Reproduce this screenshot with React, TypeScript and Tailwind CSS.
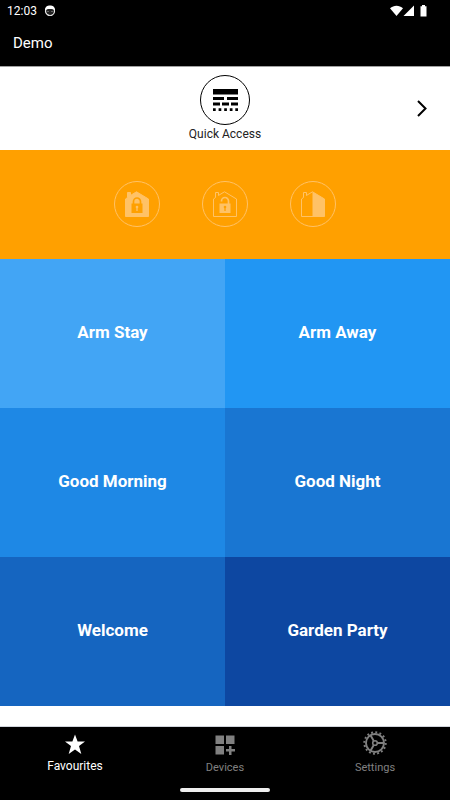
import type { ReactNode } from 'react'

interface Scene {
  name: string
  color: string
}

const SCENES: Scene[] = [
  { name: 'Arm Stay', color: 'bg-[#42a5f5]' },
  { name: 'Arm Away', color: 'bg-[#2196f3]' },
  { name: 'Good Morning', color: 'bg-[#1e88e5]' },
  { name: 'Good Night', color: 'bg-[#1976d2]' },
  { name: 'Welcome', color: 'bg-[#1565c0]' },
  { name: 'Garden Party', color: 'bg-[#0d47a1]' },
]

export default function App() {
  return (
    <div className="min-h-screen flex flex-col bg-white font-['Roboto',sans-serif]">
      <header className="bg-black text-white border-b border-neutral-400">
        <StatusBar />
        <h1 className="h-[45px] px-[13px] flex items-center text-[15px]">Demo</h1>
      </header>

      <main className="flex-1">
        <QuickAccess />

        {/* Alarm modes */}
        <section className="h-[109px] pb-px bg-[#ffa000] flex items-center justify-center gap-[42px]">
          <ModeButton label="Arm home"><HouseLocked /></ModeButton>
          <ModeButton label="Disarm"><HouseUnlocked /></ModeButton>
          <ModeButton label="Partial arm"><HouseHalf /></ModeButton>
        </section>

        {/* Scenes */}
        <section className="grid grid-cols-2">
          {SCENES.map((scene) => (
            <button
              key={scene.name}
              className={`h-[149px] pb-px text-[17px] font-bold text-white ${scene.color}`}
            >
              {scene.name}
            </button>
          ))}
        </section>
      </main>

      <BottomNav />
    </div>
  )
}

// ── Header ───────────────────────────────────────────────────────────────────

function StatusBar() {
  return (
    <div className="h-[21px] pl-[7px] pr-[22px] flex items-center text-xs">
      <span>12:03</span>
      <svg className="ml-[7px] w-3 h-3" viewBox="0 0 12 12">
        <circle cx="6" cy="6" r="4.500" fill="#222" stroke="#eee" strokeWidth="1.200" />
        <path d="M1 5.200C1 2 3.200.6 6 .6s5 1.400 5 4.600C9.500 4.500 8.200 4 6 4S2.500 4.500 1 5.200z" fill="#fff" />
        <path d="M3 6.500h2M7 6.500h2" stroke="#666" strokeWidth="1" />
        <path d="M2.500 9c2 1.500 5 1.500 7 0L8 11H4z" fill="#ddd" />
      </svg>
      <svg className="ml-auto w-[38px] h-3" viewBox="0 0 38 12" fill="#fff">
        <path d="M0 3.200C3.600-.2 9.400-.2 13 3.200L6.500 11z" />
        <path d="M24 .500V11H13.500z" />
        <path d="M30.500 1.300H32V0h3v1.300h1.500V11.500h-6z" />
      </svg>
    </div>
  )
}

// ── Quick access ─────────────────────────────────────────────────────────────

function QuickAccess() {
  return (
    <section className="h-[83px] px-3 grid grid-cols-[32px_1fr_32px]">
      <button className="col-start-2 justify-self-center pt-2 flex flex-col items-center justify-start gap-px text-xs text-[#222]">
        <span className="w-[50px] h-[50px] rounded-full border border-black flex items-center justify-center">
          <svg className="w-[25px] h-[22px]" viewBox="0 0 25 22" fill="#000">
            <path d="M0 0h25v5.500H0zM0 8h11v3H0zM14 8h11v3H14zM0 13.500h7v3H0zM9 13.500h7v3H9zM18 13.500h7v3h-7z" />
            <path d="M0 19.300h2.700V22H0zM5.600 19.300h2.700V22H5.600zM11.200 19.300h2.700V22h-2.700zM16.800 19.300h2.700V22h-2.700zM22.300 19.300H25V22h-2.700z" />
          </svg>
        </span>
        Quick Access
      </button>
      <button aria-label="Next" className="self-center justify-self-center h-8 w-8 flex items-center justify-center">
        <svg className="w-4 h-5" viewBox="0 0 16 20" fill="none" stroke="#000" strokeWidth="2">
          <path d="M4 2L11.500 9.500L4 17" />
        </svg>
      </button>
    </section>
  )
}

// ── Alarm modes ──────────────────────────────────────────────────────────────

function ModeButton({ label, children }: { label: string; children: ReactNode }) {
  return (
    <button
      aria-label={label}
      className="w-[46px] h-[46px] rounded-full border border-[#ffc266] text-[#ffc266] flex items-center justify-center"
    >
      <svg className="w-6 h-[26px]" viewBox="0 0 24 26" fill="none" stroke="currentColor">
        {children}
      </svg>
    </button>
  )
}

const HOUSE = 'M.5 25.500V8L2.500 6.500V1.500H5.500V4.500L7 3.500L11.500 .8L23.500 8V25.500z'

function HouseLocked() {
  return (
    <>
      <path d={HOUSE} fill="currentColor" />
      <path d="M8.500 13V10.500a3.500 3.500 0 0 1 7 0V13" stroke="#ffa000" strokeWidth="1.700" />
      <path d="M6.500 12.500h11v9.500h-11z" fill="#ffa000" stroke="none" />
      <circle cx="12" cy="16" r="1.300" fill="currentColor" stroke="none" />
      <path d="M12 16.500v3.500" strokeWidth="1.300" />
    </>
  )
}

function HouseUnlocked() {
  return (
    <>
      <path d={HOUSE} />
      <path d="M8.500 10.500V10a3.500 3.500 0 0 1 7 0V13" strokeWidth="1.700" />
      <path d="M6.500 12.500h11v9.500h-11z" fill="currentColor" stroke="none" />
      <circle cx="12" cy="16" r="1.300" fill="#ffa000" stroke="none" />
      <path d="M12 16.500v3.500" stroke="#ffa000" strokeWidth="1.300" />
    </>
  )
}

function HouseHalf() {
  return (
    <>
      <path d={HOUSE} />
      <path d="M11.500 .8L23.500 8V25.500h-12z" fill="currentColor" stroke="none" />
    </>
  )
}

// ── Bottom navigation ────────────────────────────────────────────────────────

function BottomNav() {
  return (
    <footer className="bg-black border-t border-gray-300">
      <nav className="h-[58px] grid grid-cols-3">
        <NavItem label="Favourites" active>
          <path d="M12 3.500l2.600 7H22l-6 4.600 2.300 7.900L12 18.500l-6.300 4.500L8 15.100 2 10.500h7.400z" fill="currentColor" />
        </NavItem>
        <NavItem label="Devices">
          <path
            d="M2.500 4.500h8.500v8.500H2.500zM13 4.500h8.500v8.500H13zM2.500 15h8.500v8.500H2.500zM16 15h2.500v3H22v2.500h-3.500V24H16v-3.500h-3V18h3z"
            fill="currentColor"
          />
        </NavItem>
        <NavItem label="Settings">
          <g fill="none" stroke="currentColor">
            <circle cx="12" cy="12" r="9" strokeWidth="1.900" />
            <circle cx="12" cy="12" r="10.700" strokeWidth="2" strokeDasharray="1.900 2.302" />
            <circle cx="12" cy="12" r="2.300" strokeWidth="1.600" />
            <path d="M14.300 12H21M10.800 10L7.500 4.200M10.800 14l-3.300 5.800" strokeWidth="1.900" />
          </g>
        </NavItem>
      </nav>
      {/* Gesture handle */}
      <div className="h-[15px] flex justify-center">
        <div className="mt-[3px] w-[90px] h-1 rounded-full bg-[#eee]" />
      </div>
    </footer>
  )
}

function NavItem({
  label,
  active = false,
  children,
}: {
  label: string
  active?: boolean
  children: ReactNode
}) {
  return (
    <a
      href="#"
      className={`pt-1 flex flex-col items-center ${
        active ? 'text-white text-[12px] leading-[14px]' : 'text-[#808080] text-[11px] leading-[18px]'
      }`}
    >
      <svg className="w-6 h-6 mb-1" viewBox="0 0 24 24">
        {children}
      </svg>
      {label}
    </a>
  )
}
